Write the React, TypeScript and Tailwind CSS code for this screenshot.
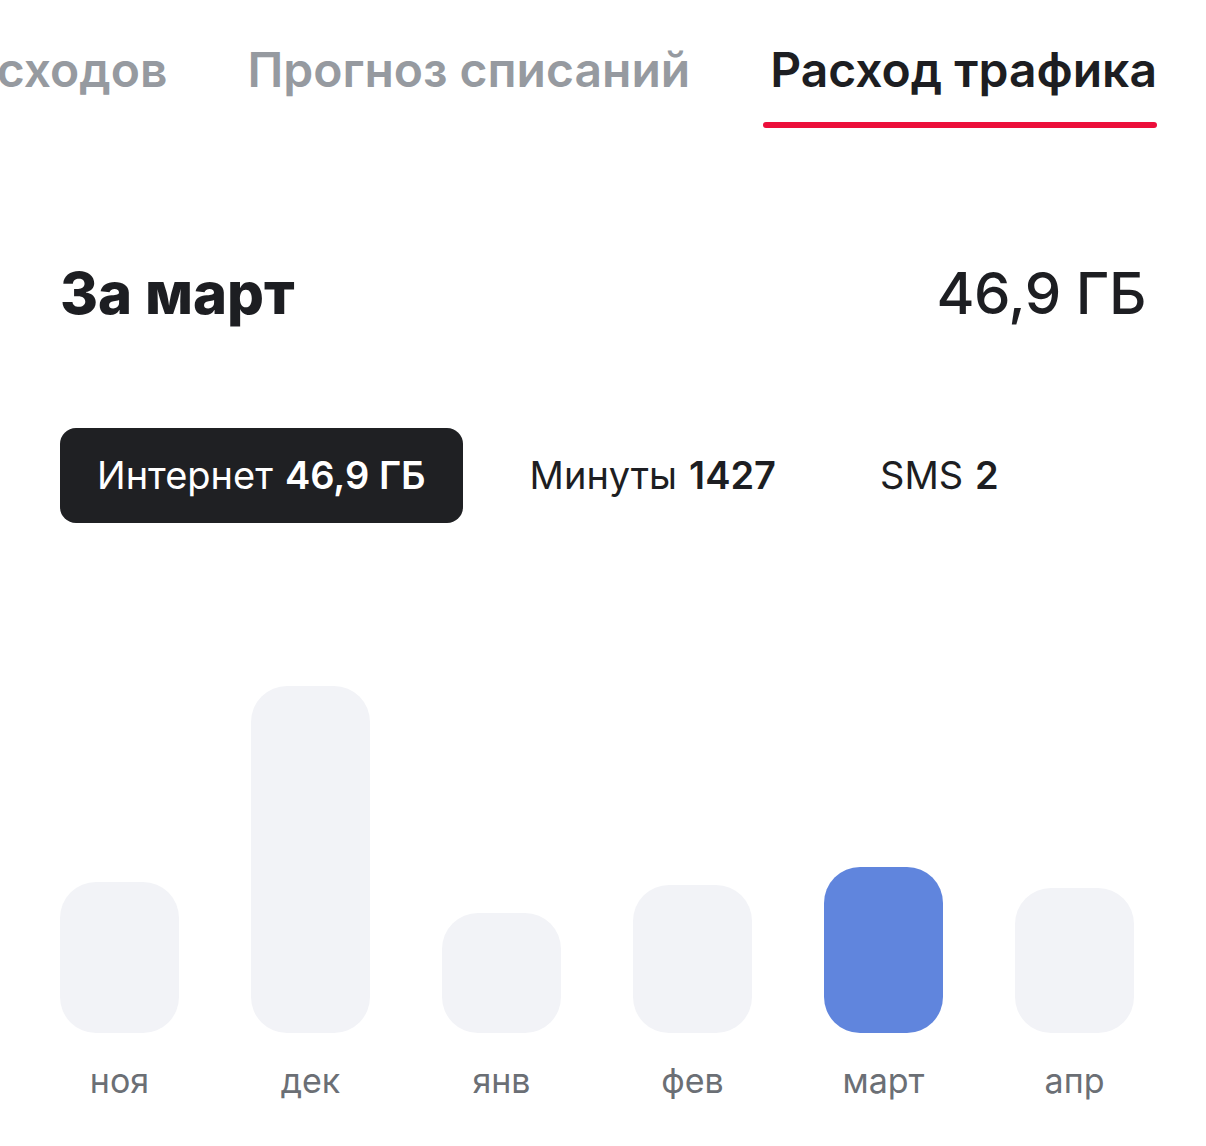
const tabs = [
  { label: "Анализ расходов", active: false },
  { label: "Прогноз списаний", active: false },
  { label: "Расход трафика", active: true },
];

const chips = [
  { label: "Интернет", value: "46,9 ГБ", active: true },
  { label: "Минуты", value: "1427", active: false },
  { label: "SMS", value: "2", active: false },
];

const months = [
  { name: "ноя", h: 151 },
  { name: "дек", h: 347 },
  { name: "янв", h: 120 },
  { name: "фев", h: 148 },
  { name: "март", h: 166, current: true },
  { name: "апр", h: 145 },
];

export default function App() {
  return (
    <div className="w-[1206px] h-[1146px] bg-white overflow-hidden font-['Inter','Liberation_Sans',sans-serif] text-[#1d1e22]">
      {/* tabs, scrolled to the end */}
      <div className="overflow-hidden">
        <div className="flex justify-end gap-[80px] pr-[49px] pt-[40px]">
          {tabs.map((t) => (
            <div key={t.label} className="flex flex-col shrink-0">
              <span
                className={
                  "text-[48px] leading-[60px] font-semibold whitespace-nowrap " +
                  (t.active ? "text-[#1d1e22]" : "text-[#969aa0]")
                }
              >
                {t.label}
              </span>
              <div
                className={
                  "mt-[22px] h-[6px] rounded-full -ml-[7px] " +
                  (t.active ? "bg-[#ec0f3b]" : "bg-transparent")
                }
              />
            </div>
          ))}
        </div>
      </div>

      {/* period total */}
      <div className="flex items-center justify-between px-[60px] mt-[130px]">
        <h2 className="text-[58px] leading-[70px] font-extrabold">За март</h2>
        <span className="text-[58px] leading-[70px] font-medium tracking-[-0.5px]">46,9 ГБ</span>
      </div>

      {/* service chips */}
      <div className="flex gap-[30px] px-[60px] mt-[100px]">
        {chips.map((c) => (
          <div
            key={c.label}
            className={
              "h-[95px] px-[37px] rounded-[16px] flex items-center text-[38px] whitespace-nowrap " +
              (c.active ? "bg-[#1f2023] text-white" : "text-[#1d1e22]")
            }
          >
            <span>{c.label}</span>
            <span className="ml-[12px] font-semibold">{c.value}</span>
          </div>
        ))}
      </div>

      {/* monthly bars */}
      <div className="flex gap-[72px] px-[60px] mt-[163px] h-[347px] items-end">
        {months.map((m) => (
          <div
            key={m.name}
            className={"w-[119px] rounded-[36px] " + (m.current ? "bg-[#6085dd]" : "bg-[#f2f3f7]")}
            style={{ height: m.h }}
          />
        ))}
      </div>
      <div className="flex gap-[72px] px-[60px] mt-[28px]">
        {months.map((m) => (
          <div key={m.name} className="w-[119px] text-center text-[34px] leading-[40px] text-[#6b6f75]">
            {m.name}
          </div>
        ))}
      </div>
    </div>
  );
}
